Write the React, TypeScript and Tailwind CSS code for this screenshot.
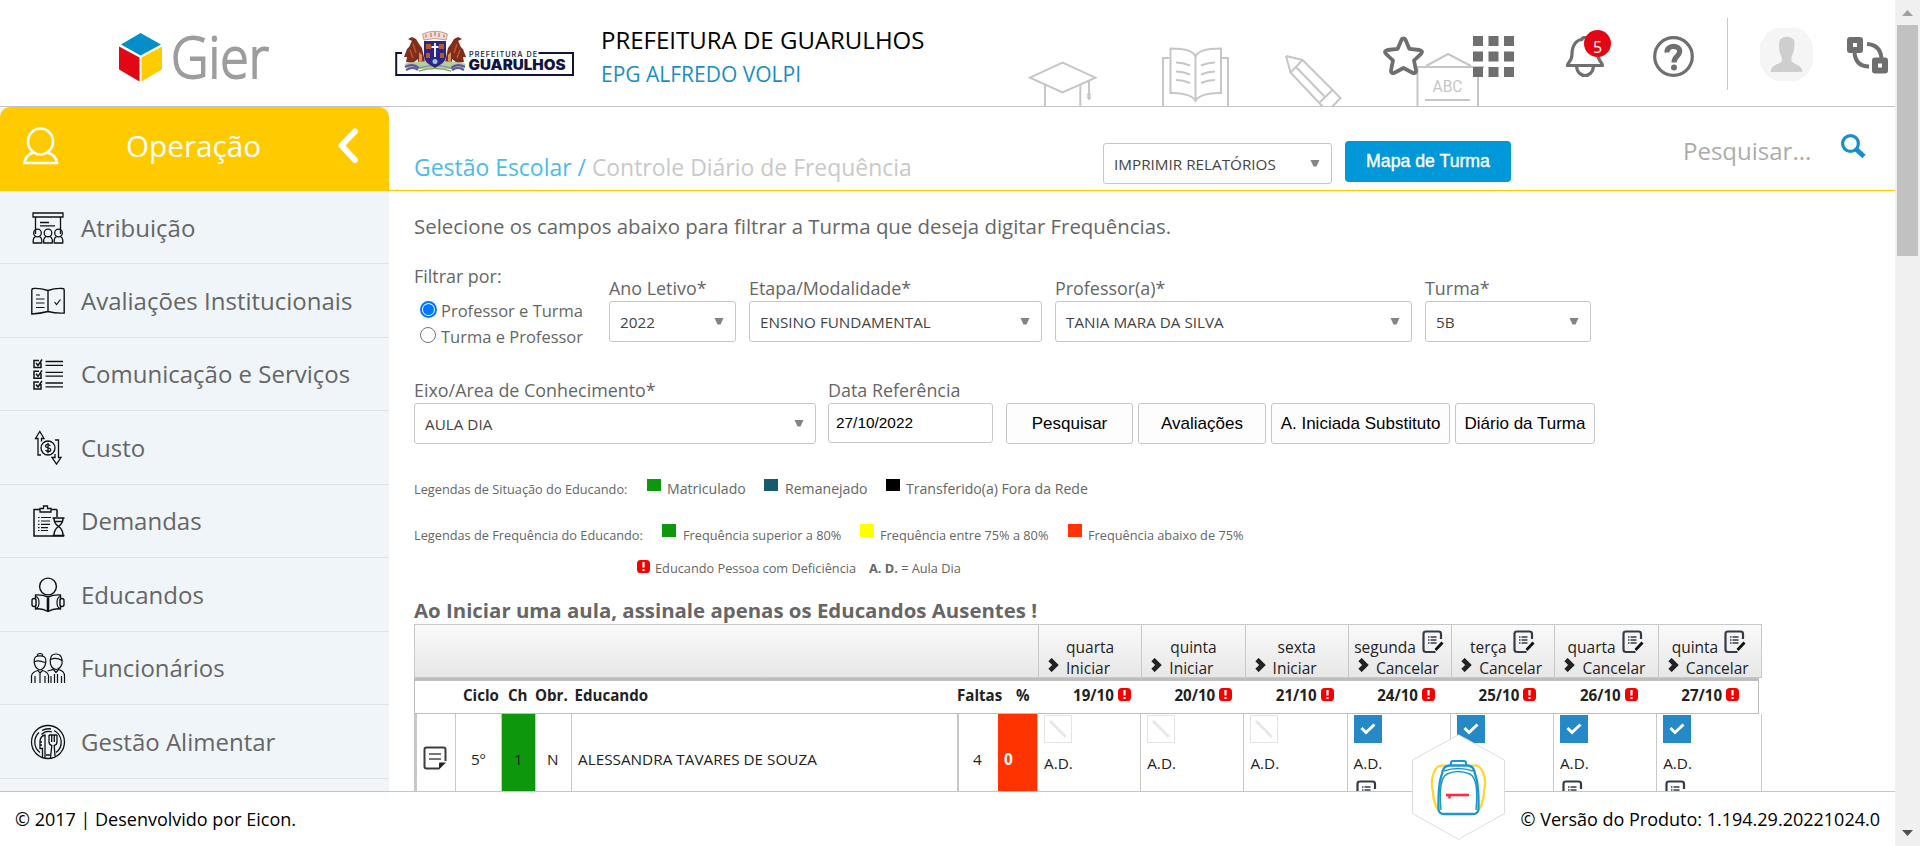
import React from "react";

type IconProps = { className?: string };

/* ---------- header drawings ---------- */

const GierLogo = () => (
  <svg width="152" height="50" viewBox="0 0 152 50" className="block overflow-visible">
    <polygon points="21.5,0 42,11.5 21.5,22.5 2,11.5" fill="#048fc8" />
    <polygon points="0,13.5 20.5,24.5 20.5,48.5 0,36.5" fill="#e30613" />
    <polygon points="43,13.5 22.5,24.5 22.5,48.5 43,36.5" fill="#ffcc00" />
    <text x="52" y="45" fontFamily="Open Sans" fontSize="57" fontWeight="300" fill="#9d9d9d" stroke="#9d9d9d" strokeWidth="1.9" textLength="98" lengthAdjust="spacingAndGlyphs">
      Gier
    </text>
  </svg>
);

const CityLogo = () => (
  <svg width="180" height="48" viewBox="0 0 180 48" className="block overflow-visible">
    <path d="M7 22H1.200V44H178V22H143.500" fill="none" stroke="#0f1440" strokeWidth="2" />
    <path d="M27 17 L24 13 L21 8 L17 6 L13 8 L17 10 C15 13 15 16 12 18 L9 26 L12 26 L11 31 L18 32 L23 28 L23 33 L30 31 Z" fill="#7f2d1c" />
    <path d="M53 17 L56 13 L59 8 L63 6 L67 8 L63 10 C65 13 65 16 68 18 L71 26 L68 26 L69 31 L62 32 L57 28 L57 33 L50 31 Z" fill="#7f2d1c" />
    <path d="M18 13l3 9M15 19l3 8M62 13l-3 9M65 19l-3 8" stroke="#c4552b" strokeWidth="1.500" />
    <path d="M24 21l3 3v6l-3 1zM56 21l-3 3v6l3 1z" fill="#d9924e" />
    <path d="M9 33C20 29 60 29 71 33L67 38H14Z" fill="#b4cf9b" />
    <path d="M10 36q8-4 14 1M56 37q6-5 14-1M11 39q7-4 12 0M57 39q6-4 12 0" fill="none" stroke="#5f55a3" strokeWidth="2.200" />
    <path d="M24 37q16-5 32 0" fill="none" stroke="#8f8ac0" strokeWidth="1.600" />
    <path d="M24 40q16-5 32 0" fill="none" stroke="#7bb04e" strokeWidth="1.600" />
    <path d="M29 10H51V25C51 31 45 34 40 37C35 34 29 31 29 25Z" fill="#2c2583" />
    <path d="M31 13h5v5h-5zM44 13h5v5h-5zM31 22h4v5h-4zM45 22h4v5h-4z" fill="#b8562c" />
    <circle cx="40" cy="30.500" r="2.500" fill="#9cc4e4" />
    <path d="M40 12v14M36.500 16h7" stroke="#fff" strokeWidth="1.800" />
    <path d="M29 9L27.500 3Q40 -2.500 52.500 3L51 9Q40 6 29 9Z" fill="#f3ddd6" stroke="#b9867c" strokeWidth="0.800" />
    <path d="M31 3.500v3M36 2v4M40 1v4M44 2v4M49 3.500v3" stroke="#b0675c" strokeWidth="1" />
    <text x="74" y="26.300" fontFamily="Inter" fontSize="7.200" fontWeight="600" fill="#2a2f52" textLength="68" lengthAdjust="spacing">
      PREFEITURA DE
    </text>
    <text x="73.500" y="39" fontFamily="Inter" fontSize="14" fontWeight="900" fill="#0f1440" textLength="97" lengthAdjust="spacingAndGlyphs">
      GUARULHOS
    </text>
  </svg>
);

const HeaderArt = ({ className }: IconProps) => (
  <svg width="460" height="60" viewBox="1025 47 460 60" fill="none" stroke="#c6c6c6" strokeWidth="2" className={className}>
    <path d="M1030 77.700L1062.500 62.500L1095.500 77.700L1062.500 92.500Z" />
    <path d="M1045 85V107M1080.300 85V107M1089 80V94" />
    <path d="M1087 94.500h4M1087 97.500h4M1089 93v7" strokeWidth="1.800" />
    <path d="M1195.500 101.500C1194 95 1180 92.500 1170.500 93V48.500C1180 48.500 1194 50 1195.500 57C1197 50 1211 48.500 1221 48.500V93C1211 92.500 1197 95 1195.500 101.500V57" />
    <path d="M1169 58H1163V107M1222 58H1228V107" />
    <path d="M1176 62.500q7 0 14 3M1176 71.500q7 0 14 3M1176 80q7 0 14 3M1215 62.500q-7 0-14 3M1215 71.500q-7 0-14 3M1215 80q-7 0-14 3" />
    <path d="M1286 56L1302.500 60L1340.500 98L1332 107M1323 107L1290.500 72.500L1286 56M1290.500 72.500L1302.500 60M1296 67L1325 97M1332.500 90L1319 103" />
    <path d="M1417.500 107V67H1478V107M1412 67H1484M1426 66L1448 54L1471 66M1425 100H1470" />
    <text x="1432.500" y="92" fontFamily="Roboto" fontSize="17" fill="#c6c6c6" stroke="none" textLength="30" lengthAdjust="spacingAndGlyphs">
      ABC
    </text>
  </svg>
);

const StarIcon = () => (
  <svg width="42" height="40" viewBox="0 0 42 40" className="block">
    <path d="M20.500 2.500Q22 2.500 22.800 4.500L26.300 12.800L36.500 14Q40.500 15 38 17.800L31 24.500L33 34.500Q33 38 30 37L20.500 32L11 37Q8 38 8 34.500L10 24.500L3 17.800Q0.500 15 4.500 14L14.700 12.800L18.200 4.500Q19 2.500 20.500 2.500Z" fill="#fff" stroke="#6f6f6f" strokeWidth="3.800" strokeLinejoin="round" />
  </svg>
);

const GridIcon = () => (
  <svg width="41" height="41" viewBox="0 0 41 41" fill="#6f6f6f" className="block">
    {[0, 15.500, 31].map((y) => [0, 15.500, 31].map((x) => <rect key={x + "-" + y} x={x} y={y} width="10" height="10" />))}
  </svg>
);

const BellIcon = () => (
  <svg width="40" height="42" viewBox="0 0 40 42" fill="none" stroke="#6f6f6f" strokeWidth="3.200" className="block">
    <path d="M1.500 29.500C1.500 26 6 26 6 18C6 9 11 3.500 16 3.500Q16 1.500 19 1.500T22 3.500C28 4.500 32 9 32 18C32 26 36.500 26 36.500 29.500Z" fill="#fff" strokeLinejoin="round" />
    <path d="M10.500 30.500C11 36.500 15 39.500 19 39.500S27 36.500 27.500 30.500" />
  </svg>
);

const HelpIcon = () => (
  <svg width="41" height="41" viewBox="0 0 41 41" fill="none" className="block">
    <circle cx="20.500" cy="20.500" r="18.800" stroke="#6f6f6f" strokeWidth="3.200" />
    <path d="M14 16.500C13.500 8.500 27 8.500 26.700 15.500C26.500 20.500 21 20 21 26.500" stroke="#6f6f6f" strokeWidth="5.200" />
    <circle cx="21" cy="31.500" r="3" fill="#6f6f6f" />
  </svg>
);

const AvatarIcon = () => (
  <svg width="53" height="53" viewBox="0 0 53 53" className="block">
    <path d="M17 0H36L46 5L53 17V36L46 47L36 53H17L7 47L0 36V17L7 5Z" fill="#f5f5f5" stroke="#f5f5f5" strokeLinejoin="round" />
    <path d="M10.500 44C11 38 16 37 20.500 34.500C22.500 33.500 22.500 31 21 28C19 24 18 14 20.500 11Q27 6 33.500 11C35.500 15 34 24 32 28C31 31 31 33.500 33 34.500C37 37 42 38 42.500 44Z" fill="#cecece" />
  </svg>
);

const SwapIcon = () => (
  <svg width="42" height="37" viewBox="0 0 42 37" fill="none" stroke="#6f6f6f" className="block">
    <rect x="3" y="3" width="10" height="10" strokeWidth="6" strokeLinejoin="round" />
    <rect x="28" y="23.500" width="10" height="10" strokeWidth="6" strokeLinejoin="round" />
    <path d="M7.500 16C8.500 25 13 29.500 22 29.500M20 7C29 7.500 33.500 12 34.500 21" strokeWidth="4" />
  </svg>
);

const SearchIcon = () => (
  <svg width="25" height="25" viewBox="0 0 25 25" fill="none" stroke="#1590c9" className="block">
    <circle cx="9.500" cy="9.500" r="7.900" strokeWidth="3.200" />
    <path d="M15.500 15.500L23 22.500" strokeWidth="4.800" />
  </svg>
);

/* ---------- sidebar drawings ---------- */

const sideSvg = "block h-[36px] w-[36px] shrink-0";

const BoardIcon = () => (
  <svg viewBox="0 0 36 36" className={sideSvg} fill="none" stroke="#111" strokeWidth="1.300">
    <path d="M3 3h30v4H3zM5.500 7v17M30.500 7v17M10 12.500h9M10 15.800h15" />
    {[7.500, 18, 28.500].map((x) => (
      <g key={x}>
        <circle cx={x} cy="23" r="3.800" />
        <path d={`M${x - 4.300} 33V30Q${x - 4} 27.500 ${x - 2} 26.500M${x + 4.300} 33V30Q${x + 4} 27.500 ${x + 2} 26.500M${x - 4.800} 33H${x + 4.800}`} />
      </g>
    ))}
  </svg>
);
const BookCheckIcon = () => (
  <svg viewBox="0 0 36 36" className={sideSvg} fill="none" stroke="#111" strokeWidth="1.400">
    <path d="M18 7.500Q10 5 3.500 5.500Q1.800 5.500 1.800 7V31Q10 30.500 18 28.500Q26 30.500 34.200 30V7Q34.200 5.500 32.500 5.500Q25 5 18 7.500V28.500" />
    <path d="M6 12h4M6 16h8.500M6 20h8.500M6 24.500h8.500M24.500 19l2 2.500l4-5" strokeWidth="1.200" />
  </svg>
);
const ChecklistIcon = () => (
  <svg viewBox="0 0 36 36" className={sideSvg} fill="none" stroke="#111" strokeWidth="1.300">
    {[4.500, 15.300, 26].map((y) => (
      <g key={y}>
        <path d={`M11 ${y + 2}V${y + 7}H4V${y}H9M6 ${y + 2.500}l2 2.500l4-6`} strokeWidth="1.500" />
        <path d={`M15.500 ${y + 1}H33M15.500 ${y + 4.800}H33`} />
      </g>
    ))}
  </svg>
);
const CostIcon = () => (
  <svg viewBox="0 0 36 36" className={sideSvg} fill="none" stroke="#111" strokeWidth="1.300">
    <circle cx="18" cy="18" r="7" />
    <path d="M20.500 15.500q-4.500-2-5 .5c0 2.500 5.300 1.200 5.300 3.800c-.3 2.400-4 2-5.300.4M18 12.800v10.500" />
    <path d="M11 25H8V8.500H5.500L9.800 1.500L14 8.500H11.500V11.500M25 10H28.500V27.500H31L26.500 34L22 27.500H25V24" />
  </svg>
);
const DemandIcon = () => (
  <svg viewBox="0 0 36 36" className={sideSvg} fill="none" stroke="#111" strokeWidth="1.500">
    <path d="M10 6.500H4V33H34M27 6.500H21M27 6.500V14" />
    <path d="M10 9V5.500H13.500V3H17.500V5.500H21V9Z" strokeWidth="1.300" />
    <path d="M8 14.500h13M8 18h12M8 21.300h12M8 24.600h10M8 27.500h10" strokeDasharray="1.500 1.500 20" strokeWidth="1.200" />
    <path d="M22.500 15H34.500M22.500 32.500H34.500M24 15Q24 20.500 28.500 23.500Q33 20.500 33 15M24 32.500Q24 26.500 28.500 23.500Q33 26.500 33 32.500M25.500 18.500h6" />
  </svg>
);
const ReaderIcon = () => (
  <svg viewBox="0 0 36 36" className={sideSvg} fill="none" stroke="#111" strokeWidth="1.400">
    <circle cx="18" cy="9.500" r="8.400" />
    <path d="M18 20Q12 17.500 5.500 18V32Q12 31 18 34.500Q24 31 30.500 32V18Q24 17.500 18 20Z" />
    <path d="M18 20.500V34.500" strokeWidth="2.600" />
    <rect x="2" y="21.500" width="4" height="8" rx="2" fill="#eff5f9" />
    <rect x="30" y="21.500" width="4" height="8" rx="2" fill="#eff5f9" />
    <path d="M6 19.500q3 1 3 6t-3 6M30 19.500q-3 1-3 6t3 6" strokeWidth="1.200" />
  </svg>
);
const StaffIcon = () => (
  <svg viewBox="0 0 36 36" className={sideSvg} fill="none" stroke="#111" strokeWidth="1.200">
    <path d="M4.500 14C3 6 7 5.800 10 5.800S17 6 15.500 14Q14 19 10 20Q6 19 4.500 14ZM7.500 5.800Q7 3.500 10 3.500T12.500 5.800M4.500 11.500Q9 10 15 12.500" />
    <path d="M20.500 14Q19 4 26 4Q33 4 32 14Q30 19 26 19.500Q22 19 20.500 14ZM20.500 9.500Q26 7 32 10.500" />
    <path d="M1.500 33V26Q2 22 8 20.500L10 23L12.500 20.500Q18 22 18.500 26V33M5 26v7M15 26v7M10 23v10" />
    <path d="M17.500 21L23.500 19.500L26 22.500L28.500 19.500Q34.500 21 34.500 26V33M24.500 24v9M27.500 24v9M31.500 26v7M21 26v7" />
  </svg>
);
const PlateIcon = () => (
  <svg viewBox="0 0 36 36" className={sideSvg} fill="none" stroke="#111" strokeWidth="1.300">
    <circle cx="18" cy="18" r="16.500" />
    <path d="M10 28.500A13 13 0 0 1 9 8.500M12 6.500A13 13 0 0 1 21 5M24 6.500A13 13 0 0 1 26 28.500M11.500 10.500A10 10 0 0 1 22 8" />
    <path d="M15 34V11Q10.500 12 10 17V24.500H12.500V33M10 18h2M10 21h2" />
    <path d="M19 11V17.500Q19 21 21.800 21.500L20.500 34M27 11V17.500Q27 21 24.200 21.500L25 32M21.700 11v7M24.300 11v7M19 11h8M16 31h4" />
  </svg>
);

const UserIcon = () => (
  <svg width="37" height="38" viewBox="0 0 37 38" fill="none" stroke="#fff" strokeWidth="2.600" className="block">
    <ellipse cx="17.500" cy="14.500" rx="12.500" ry="13" />
    <path d="M10.500 25.500Q2.500 28 1.500 36H34Q33 28 24.500 25.500" />
  </svg>
);

const BackIcon = () => (
  <svg width="24" height="38" viewBox="0 0 24 38" fill="none" stroke="#fff" strokeWidth="6" strokeLinecap="round" strokeLinejoin="round" className="block">
    <path d="M18 4.500L4.500 18.500L18 33" />
  </svg>
);

/* ---------- table drawings ---------- */

const AlertMark = () => (
  <svg width="13" height="13" viewBox="0 0 13 13" className="block shrink-0">
    <rect width="13" height="13" rx="3.600" fill="#f80000" />
    <path d="M6.500 2v5.500M6.500 9v2" stroke="#fff" strokeWidth="2.200" />
  </svg>
);

const EditNote = () => (
  <svg width="22" height="24" viewBox="0 0 22 24" fill="none" stroke="#333c46" strokeWidth="2.200" className="block shrink-0">
    <path d="M19 9V4Q19 1.500 16.500 1.500H4Q1.500 1.500 1.500 4V19.500Q1.500 22 4 22H13.500" />
    <path d="M6 7h1.500M8.500 7h6M6 10h1.500M8.500 10h6M6 13h1.500M8.500 13h6" strokeWidth="1.500" />
    <path d="M20.500 12.500L13.500 20" strokeWidth="2.800" stroke="#111" />
  </svg>
);

const PlainNote = () => (
  <svg width="24" height="24" viewBox="0 0 24 24" fill="none" stroke="#3c3c3c" className="block">
    <path d="M22.500 15V3.500Q22.500 1.500 20.500 1.500H3.500Q1.500 1.500 1.500 3.500V20.500Q1.500 22.500 3.500 22.500H16" strokeWidth="2" />
    <path d="M6 8h12M6 13h12" strokeWidth="2.200" stroke="#777" />
    <path d="M23 16.500L16 23.500V17.500Q16 16.500 17 16.500Z" fill="#222" stroke="none" />
  </svg>
);

const Arrow = () => (
  <svg width="11" height="14" viewBox="0 0 11 14" fill="none" stroke="#222" strokeWidth="4.600" className="block shrink-0">
    <path d="M2 1.500L7.500 7L2 12.500" />
  </svg>
);

const Backpack = () => (
  <svg width="93" height="106" viewBox="0 0 93 106" className="block">
    <path d="M46.500 0.800L92.500 26V79.500L46.500 105.300L0.500 79.500V26Z" fill="#fff" stroke="#dcdcdc" />
    <g fill="none">
      <path d="M34 32C22 28 18 45 21 58C22 72 26 76 30 80M59 32C71 28 75 45 72 58C71 72 67 76 63 80" stroke="#ffd633" strokeWidth="2.400" />
      <path d="M39 32V29Q39 27 41 27H52Q54 27 54 29V32" stroke="#1d97cb" strokeWidth="2.200" />
      <path d="M30 40Q31 32 37 31.500H56Q62 32 63 40Q67 50 66.500 75Q66 80 61 80H32Q27 80 26.500 75Q26 50 30 40Z" fill="#fff" stroke="#1d97cb" strokeWidth="2.300" />
      <path d="M29 76Q26 45 35 40Q46 35 58 40Q67 45 64 76M32 37Q46 32 61 37" stroke="#1d97cb" strokeWidth="1.500" />
      <path d="M34 61H57" stroke="#ff2a3c" strokeWidth="2.600" />
      <path d="M37.500 61v3.500" stroke="#ff2a3c" strokeWidth="2.500" />
    </g>
  </svg>
);

/* ---------- form pieces ---------- */

const Select = ({ value, className }: { value: string; className: string }) => (
  <div className={"flex h-[41px] items-center justify-between rounded-[3px] border border-[#c6c6c6] bg-white pl-[10px] pr-[11px] text-[15.250px] leading-[39px] text-[#444] " + className}>
    <span className="whitespace-nowrap pt-[1px]">{value}</span>
    <svg width="10" height="7" viewBox="0 0 10 7" className="block shrink-0">
      <path d="M0.500 0H9.500L6.500 6.500H3.500Z" fill="#848484" />
    </svg>
  </div>
);

const Field = ({ label, children }: { label: string; children: React.ReactNode }) => (
  <div className="flex flex-col gap-[1px]">
    <label className="whitespace-nowrap text-[17.900px] leading-[24px]">{label}</label>
    {children}
  </div>
);

const PlainButton = ({ label, className }: { label: string; className: string }) => (
  <button className={"h-[41px] whitespace-nowrap rounded-[3px] border border-[#c6c6c6] bg-[#fdfdfd] font-['Liberation_Sans',sans-serif] text-[17px] leading-[39px] text-black " + className}>
    {label}
  </button>
);

const menu = [
  { label: "Atribuição", Icon: BoardIcon },
  { label: "Avaliações Institucionais", Icon: BookCheckIcon },
  { label: "Comunicação e Serviços", Icon: ChecklistIcon },
  { label: "Custo", Icon: CostIcon },
  { label: "Demandas", Icon: DemandIcon },
  { label: "Educandos", Icon: ReaderIcon },
  { label: "Funcionários", Icon: StaffIcon },
  { label: "Gestão Alimentar", Icon: PlateIcon },
];

const days = [
  { day: "quarta", date: "19/10", action: "Iniciar", open: false },
  { day: "quinta", date: "20/10", action: "Iniciar", open: false },
  { day: "sexta", date: "21/10", action: "Iniciar", open: false },
  { day: "segunda", date: "24/10", action: "Cancelar", open: true },
  { day: "terça", date: "25/10", action: "Cancelar", open: true },
  { day: "quarta", date: "26/10", action: "Cancelar", open: true },
  { day: "quinta", date: "27/10", action: "Cancelar", open: true },
];

const Header = () => (
  <header className="relative flex h-[107px] shrink-0 items-start border-b border-[#c6c6c6]">
    <HeaderArt className="absolute left-[1025px] top-[47px]" />
    <div className="ml-[119px] mt-[33px] w-[276px]">
      <GierLogo />
    </div>
    <div className="mt-[31px] w-[206px]">
      <CityLogo />
    </div>
    <div className="mt-[23px] w-[782px] whitespace-nowrap">
      <div className="text-[24px] leading-[33px] text-black">PREFEITURA DE GUARULHOS</div>
      <div className="text-[21px] leading-[37px] text-[#1a8dc6]">EPG ALFREDO VOLPI</div>
    </div>
    <div className="relative mt-[36px] w-[90px]">
      <StarIcon />
    </div>
    <div className="relative mt-[36px] w-[93px]">
      <GridIcon />
    </div>
    <div className="relative mt-[36px] w-[87px]">
      <BellIcon />
      <span className="absolute left-[18px] top-[-6px] h-[27px] w-[27px] rounded-full bg-[#e30613] text-center text-[16px] leading-[34px] text-white">5</span>
    </div>
    <div className="mt-[36px] w-[74px]">
      <HelpIcon />
    </div>
    <div className="mt-[18px] h-[72px] w-[33px] border-l border-[#c6c6c6]" />
    <div className="mt-[28px] w-[87px]">
      <AvatarIcon />
    </div>
    <div className="mt-[37px]">
      <SwapIcon />
    </div>
  </header>
);

const Sidebar = () => (
  <aside className="w-[389px] shrink-0 bg-[#eff5f9]">
    <div className="flex h-[84px] items-start rounded-t-[10px] bg-[#ffcb00] text-white">
      <div className="ml-[23px] mt-[20px] w-[103px]">
        <UserIcon />
      </div>
      <div className="mt-[19px] w-[211px] text-[29.700px] leading-[40px]">Operação</div>
      <div className="mt-[20px]">
        <BackIcon />
      </div>
    </div>
    <nav>
      {menu.map(({ label, Icon }) => (
        <div key={label} className="flex h-[73.500px] items-center gap-[15px] border-b border-[#dbe2e8] pl-[30px] pt-[1px] text-[24px] leading-[32px] text-[#666] first:h-[73px]">
          <Icon />
          <span className="whitespace-nowrap">{label}</span>
        </div>
      ))}
    </nav>
  </aside>
);

const Attendance = () => (
  <div className="text-[15.300px] leading-[20px] text-[#222]">
    <div className="flex h-[54px] w-[1348px] border border-[#c8c8c8] bg-gradient-to-b from-[#fafafa] to-[#e7e7e7] text-[15.500px]">
      <div className="w-[623px] shrink-0" />
      {days.map((d) => (
        <div key={d.date} className="w-[103.300px] shrink-0 border-l border-[#c8c8c8]">
          <div className={d.open ? "flex h-[32px] items-start justify-center gap-[6px] pr-[2px]" : "flex h-[32px] items-start justify-center"}>
            <span className="mt-[12px]">{d.day}</span>
            {d.open && (
              <span className="mt-[5px]">
                <EditNote />
              </span>
            )}
          </div>
          <div className="flex items-start gap-[7px] pl-[9px]">
            <span className="mt-[1px]">
              <Arrow />
            </span>
            <span className="pt-[1px]">{d.action}</span>
          </div>
        </div>
      ))}
    </div>
    <div className="flex h-[36px] w-[1345px] items-start border border-t-[3px] border-[#bdbdbd] pt-[2px] text-[15.100px] font-bold leading-[24px]">
      <span className="w-[48px] shrink-0" />
      <span className="w-[45px] shrink-0">Ciclo</span>
      <span className="w-[27px] shrink-0">Ch</span>
      <span className="w-[39.500px] shrink-0">Obr.</span>
      <span className="w-[382.500px] shrink-0">Educando</span>
      <span className="w-[59px] shrink-0">Faltas</span>
      <span className="w-[57px] shrink-0">%</span>
      {days.map((d) => (
        <span key={d.date} className="flex w-[101.400px] shrink-0 gap-[4px]">
          {d.date}
          <span className="mt-[5px]">
            <AlertMark />
          </span>
        </span>
      ))}
    </div>
    <div className="flex h-[90px] w-[1348px] border-x border-[#c8c8c8] leading-[91px]">
      <div className="flex w-[41px] shrink-0 justify-end border-l-2 border-r border-[#c8c8c8] pr-[8px] pt-[32px]">
        <PlainNote />
      </div>
      <div className="w-[46px] shrink-0 border-r border-[#c8c8c8] pl-[15px]">5º</div>
      <div className="w-[33px] shrink-0 bg-[#0d970d] pl-[12px]">1</div>
      <div className="w-[37px] shrink-0 border-x border-[#c8c8c8] pl-[11px]">N</div>
      <div className="w-[387px] shrink-0 border-r-2 border-[#c8c8c8] pl-[6px]">ALESSANDRA TAVARES DE SOUZA</div>
      <div className="w-[39px] shrink-0 pl-[14px]">4</div>
      <div className="w-[39px] shrink-0 bg-[#ff3300] pl-[6px] font-bold text-white">0</div>
      {days.map((d) => (
        <div key={d.date} className="w-[103.200px] shrink-0 border-l border-[#c8c8c8] pl-[6px] pt-[1px] leading-[24px]">
          {d.open ? (
            <div className="flex h-[28px] w-[28px] items-center justify-center bg-[#2589c7]">
              <svg width="16" height="12" viewBox="0 0 16 12" fill="none" stroke="#fff" strokeWidth="3">
                <path d="M1.500 5L6 9.500L14.500 1.500" />
              </svg>
            </div>
          ) : (
            <div className="flex h-[28px] w-[28px] items-center justify-center border border-[#e3e3df]">
              <svg width="18" height="18" viewBox="0 0 18 18" stroke="#e8e8e4" strokeWidth="3">
                <path d="M1 1L17 17" />
              </svg>
            </div>
          )}
          <div className="mt-[8px]">A.D.</div>
          {d.open && (
            <div className="pl-[2px] pt-[5px]">
              <EditNote />
            </div>
          )}
        </div>
      ))}
    </div>
  </div>
);

const Swatch = ({ className }: IconProps) => <span className={"w-[14px] shrink-0 " + className} />;

const Main = () => (
  <main className="flex-1 overflow-hidden bg-white text-[#666]">
    <div className="flex h-[84px] items-start border-b border-[#ffcb00] pl-[25px]">
      <div className="mt-[44px] w-[689px] whitespace-nowrap text-[22.950px] leading-[33px] text-[#c9c9c9]">
        <span className="text-[#4cbbe9]">Gestão Escolar / </span>Controle Diário de Frequência
      </div>
      <Select value="IMPRIMIR RELATÓRIOS" className="mt-[36px] w-[229px]" />
      <button className="ml-[13px] mt-[34px] h-[41px] w-[166px] rounded-[4px] bg-[#0098d8] font-['Liberation_Sans',sans-serif] text-[17.700px] leading-[39px] text-white [-webkit-text-stroke:0.4px_white]">
        Mapa de Turma
      </button>
      <div className="ml-[172px] mt-[28px] w-[158px] text-[24px] leading-[32px] text-[#acacac]">Pesquisar...</div>
      <div className="mt-[27px]">
        <SearchIcon />
      </div>
    </div>
    <div className="pl-[25px] pt-[21px]">
      <p className="text-[20.400px] leading-[28px]">Selecione os campos abaixo para filtrar a Turma que deseja digitar Frequências.</p>
      <div className="mt-[24px] flex items-start">
        <div className="w-[195px] shrink-0 text-[16.500px] leading-[26px]">
          <div className="mb-[10px] text-[17.900px] leading-[24px]">Filtrar por:</div>
          <label className="flex gap-[4px] pl-[6px]">
            <span className="mt-[3px] flex h-[17px] w-[17px] items-center justify-center rounded-full border-2 border-[#0075ff]">
              <span className="h-[11px] w-[11px] rounded-full bg-[#0075ff]" />
            </span>
            Professor e Turma
          </label>
          <label className="flex gap-[4px] pl-[6px]">
            <span className="mt-[3px] h-[16px] w-[16px] rounded-full border border-[#767676]" />
            <span className="pl-[1px]">Turma e Professor</span>
          </label>
        </div>
        <div className="mt-[12px] flex gap-[13px]">
          <Field label="Ano Letivo*">
            <Select value="2022" className="w-[127px]" />
          </Field>
          <Field label="Etapa/Modalidade*">
            <Select value="ENSINO FUNDAMENTAL" className="w-[293px]" />
          </Field>
          <Field label="Professor(a)*">
            <Select value="TANIA MARA DA SILVA" className="w-[357px]" />
          </Field>
          <Field label="Turma*">
            <Select value="5B" className="w-[166px]" />
          </Field>
        </div>
      </div>
      <div className="mt-[28px] flex items-end">
        <Field label="Eixo/Area de Conhecimento*">
          <Select value="AULA DIA" className="w-[402px]" />
        </Field>
        <div className="ml-[12px] w-[178px]">
          <Field label="Data Referência">
            <div className="mb-[1px] h-[40px] w-[165px] rounded-[3px] border border-[#c6c6c6] pl-[7px] font-['Liberation_Sans',sans-serif] text-[15.400px] leading-[38px] text-black">27/10/2022</div>
          </Field>
        </div>
        <div className="flex gap-[5px]">
          <PlainButton label="Pesquisar" className="w-[127px]" />
          <PlainButton label="Avaliações" className="w-[128px]" />
          <PlainButton label="A. Iniciada Substituto" className="w-[179px]" />
          <PlainButton label="Diário da Turma" className="w-[140px]" />
        </div>
      </div>
      <div className="mt-[35px] flex items-start whitespace-nowrap text-[14.100px] leading-[20px]">
        <span className="w-[233px] text-[12.750px]">Legendas de Situação do Educando:</span>
        <Swatch className="h-[12px] bg-[#0d970d]" />
        <span className="ml-[6px] w-[97px]">Matriculado</span>
        <Swatch className="h-[12px] bg-[#175a6b]" />
        <span className="ml-[7px] w-[101px]">Remanejado</span>
        <Swatch className="h-[12px] bg-black" />
        <span className="ml-[6px]">Transferido(a) Fora da Rede</span>
      </div>
      <div className="mt-[25px] flex items-start whitespace-nowrap text-[12.750px] leading-[22px]">
        <span className="w-[248px]">Legendas de Frequência do Educando:</span>
        <Swatch className="h-[13px] bg-[#0d970d]" />
        <span className="ml-[7px] w-[177px]">Frequência superior a 80%</span>
        <Swatch className="h-[13px] bg-[#ffff00]" />
        <span className="ml-[6px] w-[188px]">Frequência entre 75% a 80%</span>
        <Swatch className="h-[13px] bg-[#ff3300]" />
        <span className="ml-[6px]">Frequência abaixo de 75%</span>
      </div>
      <div className="mt-[12px] flex items-start whitespace-nowrap pl-[223px] text-[12.750px] leading-[20px]">
        <span className="mt-[2px]">
          <AlertMark />
        </span>
        <span className="ml-[5px] w-[214px]">Educando Pessoa com Deficiência</span>
        <span>
          <b>A. D.</b> = Aula Dia
        </span>
      </div>
      <h2 className="mt-[18px] h-[28px] text-[20.400px] font-bold leading-[28px]">Ao Iniciar uma aula, assinale apenas os Educandos Ausentes !</h2>
      <Attendance />
    </div>
  </main>
);

export default function App() {
  return (
    <div className="flex h-[846px] w-[1920px] overflow-hidden bg-white font-['Open_Sans',sans-serif]">
      <div className="relative flex w-[1895px] flex-col">
        <Header />
        <div className="flex h-[684px] overflow-hidden">
          <Sidebar />
          <Main />
        </div>
        <footer className="flex h-[55px] items-start justify-between border-t border-[#c6c6c6] bg-white pl-[15px] pr-[15px] pt-[13px] text-[18px] leading-[28px] text-black">
          <span>© 2017 | Desenvolvido por Eicon.</span>
          <span>© Versão do Produto: 1.194.29.20221024.0</span>
        </footer>
        <div className="absolute left-[1412px] top-[734px]">
          <Backpack />
        </div>
      </div>
      <div className="flex w-[25px] flex-col items-center justify-between bg-[#f0f0f0] pb-[10px] pt-[10px]">
        <div className="flex flex-col items-center gap-[9px]">
          <svg width="11" height="6" viewBox="0 0 11 6" className="block">
            <path d="M5.500 0L11 6H0Z" fill="#a0a0a0" />
          </svg>
          <div className="h-[231px] w-[21px] bg-[#c1c1c1]" />
        </div>
        <svg width="11" height="6" viewBox="0 0 11 6" className="block">
          <path d="M0 0H11L5.500 6Z" fill="#505050" />
        </svg>
      </div>
    </div>
  );
}
